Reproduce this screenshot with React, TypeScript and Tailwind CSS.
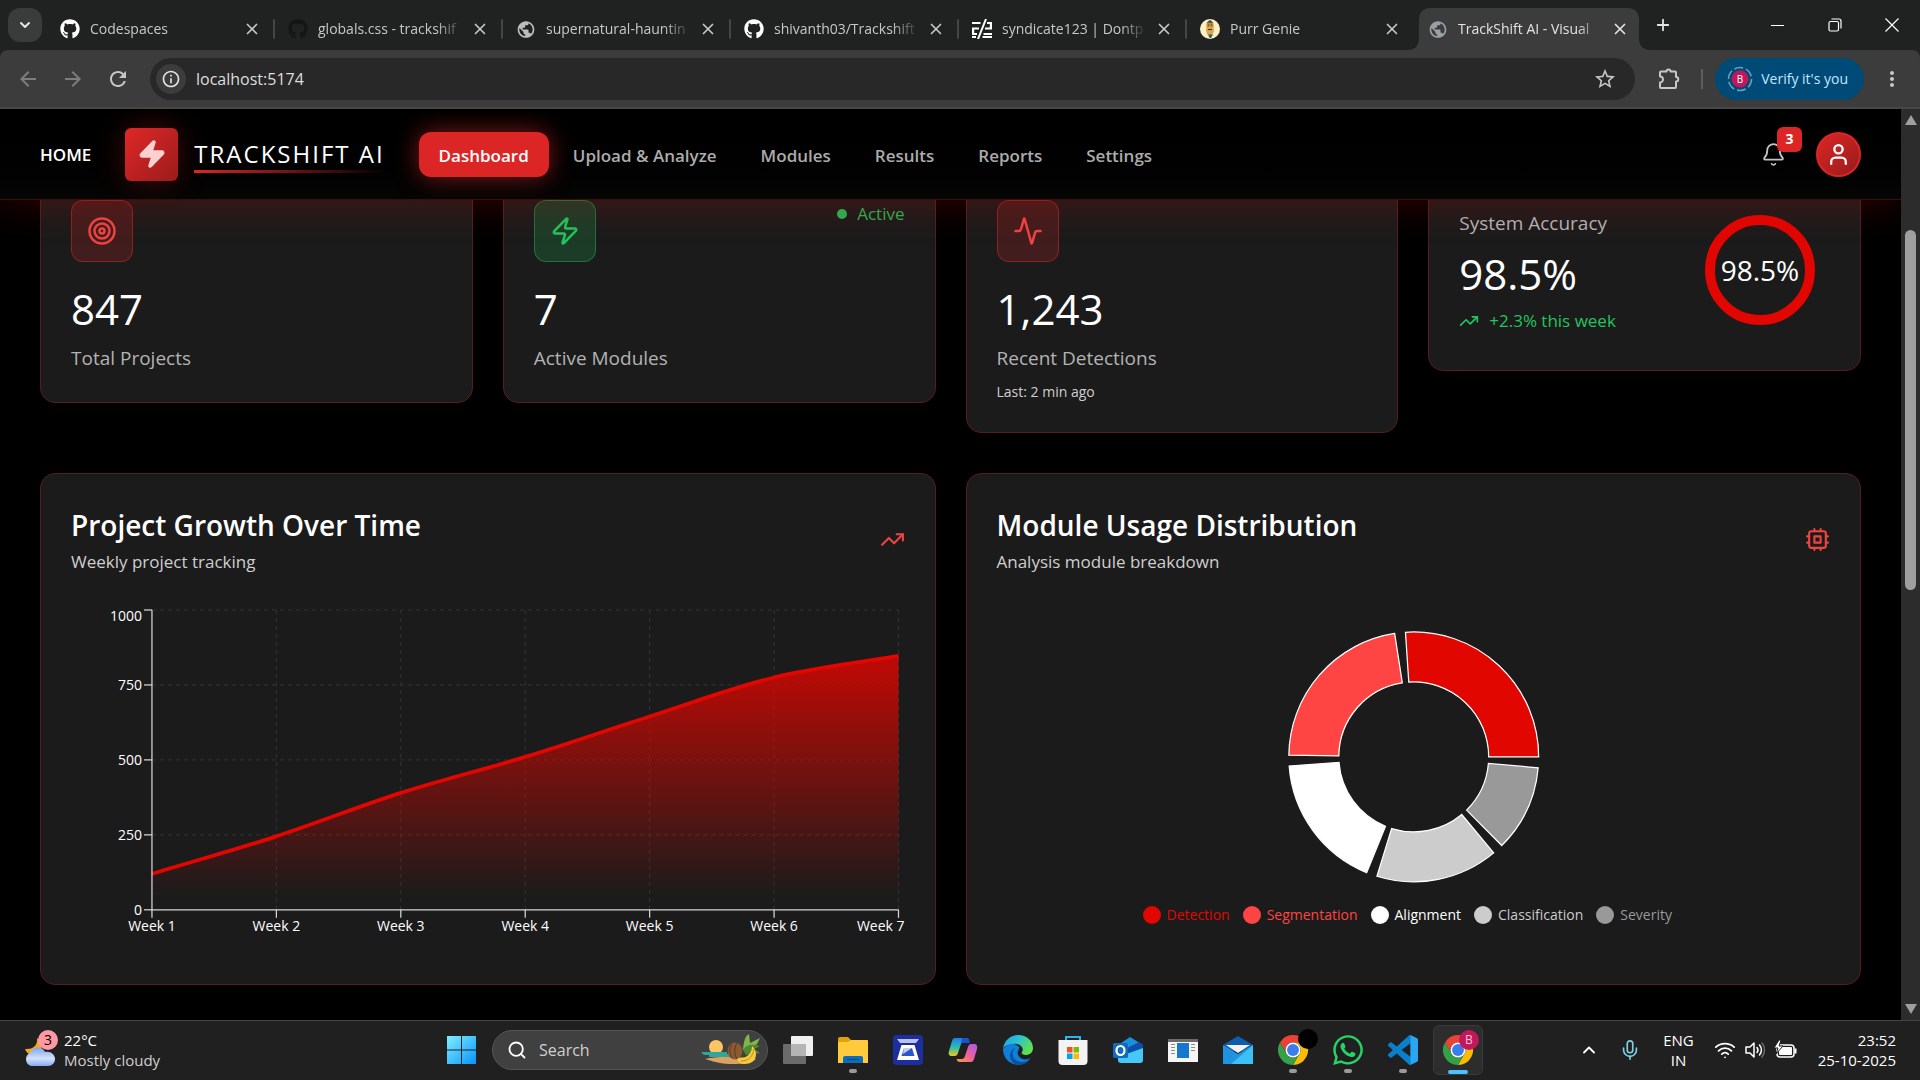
import React from 'react';
import { Activity, Bell, ChevronDown, ChevronUp, Mic, Plus, Search, Target, TrendingUp, User, Wifi, X, Zap } from 'lucide-react';
import { FaGithub, FaWhatsapp } from 'react-icons/fa';
import { MdArrowBack, MdArrowForward, MdInfoOutline, MdMoreVert, MdPublic, MdRefresh, MdStarOutline } from 'react-icons/md';

/* ---------- Browser window ---------- */

const SyndicateIcon = () => (
  <svg viewBox="0 0 20 20" className="h-5 w-5" fill="none" stroke="#fff" strokeWidth="2.2">
    <path d="M0 4h8.500M0 9.500h7M0 15h5M15 4h5M13 9.500h7M11.500 15H20M0 18h4M10.500 18H20" />
    <path d="M14 0L6 20" strokeWidth="2" />
    <path d="M1.100 9v6M18.900 4v6" />
  </svg>
);

const GenieIcon = () => (
  <svg viewBox="0 0 20 20" className="h-5 w-5">
    <circle cx="10" cy="10" r="10" fill="#fdf0c4" />
    <path d="M6.5 5.5c0-5 7-5 7 0v3h-7z" fill="#c98a35" />
    <path d="M6.8 3.8L10 .8l3.2 3z" fill="#1f5f5b" />
    <path d="M6.6 8h6.8l.6 4-1.6 4H7.6L6 12z" fill="#d9a557" />
    <path d="M8 15.5h5l-2 3.5H9.6z" fill="#1f6b62" />
    <path d="M8 6h1M11 6h1M8 10.5h4" stroke="#4d2f12" strokeWidth="1" />
  </svg>
);

const PuzzleIcon = () => (
  <svg viewBox="0 0 24 24" className="h-6 w-6" fill="none" stroke="currentColor" strokeWidth="2" strokeLinejoin="round">
    <path d="M3 5.500A1 1 0 0 1 4 4.500h5.500a2 2 0 0 1 4 0H18a1 1 0 0 1 1 1V10a2 2 0 0 1 0 4.500V20a1 1 0 0 1-1 1H4a1 1 0 0 1-1-1v-4.500a3 3 0 0 0 0-6z" />
  </svg>
);

const tabs = [
  { title: 'Codespaces', icon: <FaGithub className="h-5 w-5 text-white" /> },
  { title: 'globals.css - trackshif', icon: <FaGithub className="h-5 w-5 text-[#141515]" /> },
  { title: 'supernatural-hauntin', icon: <MdPublic className="h-[21px] w-[21px] text-[#bdbdbd]" /> },
  { title: 'shivanth03/Trackshift', icon: <FaGithub className="h-5 w-5 text-white" /> },
  { title: 'syndicate123 | Dontp', icon: <SyndicateIcon /> },
  { title: 'Purr Genie', icon: <GenieIcon /> },
  { title: 'TrackShift AI - Visual', icon: <MdPublic className="h-[21px] w-[21px] text-[#9aa0a6]" />, active: true },
];

const TabBar = () => (
  <div className="flex h-[50px] items-end bg-[#1f2221]">
    <button aria-label="Search tabs" className="mb-2 ml-2 flex h-[34px] w-[34px] items-center justify-center rounded-xl bg-[#3a3b3b] text-[#e3e3e3]">
      <ChevronDown className="h-4 w-4" strokeWidth={3} />
    </button>
    <div className="ml-[5px] flex min-w-0">
      {tabs.map((tab, i) => (
        <div
          key={tab.title}
          className={`relative flex h-[42px] w-[228px] min-w-0 items-center gap-2 pr-3.5 pl-[13px] ${
            tab.active ? 'text-[#e3e3e3]' : 'text-[#c7c7c7]'
          }`}
        >
          {tab.active && (
            <svg viewBox="0 0 244 42" preserveAspectRatio="none" className="absolute inset-y-0 -left-2 h-full w-[244px]" fill="#3c3c3c">
              <path d="M0 42C8 42 12 38 12 30V12C12 4 16 0 24 0H220C228 0 232 4 232 12V30C232 38 236 42 244 42Z" />
            </svg>
          )}
          <span className="relative flex w-5 shrink-0 justify-center">{tab.icon}</span>
          <span className="relative ml-0.5 min-w-0 flex-1 overflow-hidden text-sm whitespace-nowrap [mask-image:linear-gradient(to_right,#000_82%,transparent)]">
            {tab.title}
          </span>
          <button aria-label={`Close ${tab.title}`} className="relative">
            <X className="h-[18px] w-[18px]" strokeWidth={2.2} />
          </button>
          {i < tabs.length - 2 && <span className="absolute right-0 h-5 w-0.5 rounded bg-[#454646]" />}
        </div>
      ))}
    </div>
    <button aria-label="New tab" className="ml-0.5 flex h-[50px] w-9 items-center justify-center text-[#e3e3e3]">
      <Plus className="h-[18px] w-[18px]" strokeWidth={2.4} />
    </button>
    <div className="ml-auto flex h-[50px] text-white">
      <button aria-label="Minimize" className="flex w-[57px] items-center justify-center">
        <span className="h-px w-[13px] bg-white" />
      </button>
      <button aria-label="Restore" className="flex w-[57px] items-center justify-center">
        <svg viewBox="0 0 14 14" className="h-3.5 w-3.5" fill="none" stroke="#fff" strokeWidth="1.2">
          <rect x="1" y="3.5" width="9.5" height="9.5" rx="1.5" />
          <path d="M3.5 1H11a2 2 0 0 1 2 2v7.5" />
        </svg>
      </button>
      <button aria-label="Close window" className="flex w-[57px] items-center justify-center">
        <svg viewBox="0 0 14 14" className="h-3.5 w-3.5" stroke="#fff" strokeWidth="1.2">
          <path d="M.5.5l13 13M13.5.5l-13 13" />
        </svg>
      </button>
    </div>
  </div>
);

const Toolbar = () => (
  <div className="flex h-[59px] items-center rounded-t-lg border-b-2 border-[#474747] bg-[#3c3c3c] pr-4 pl-4 text-[#c7c7c7]">
    <button aria-label="Back" className="w-[45px] text-[#7d7d7d]">
      <MdArrowBack className="h-6 w-6" />
    </button>
    <button aria-label="Forward" className="w-[45px] text-[#7d7d7d]">
      <MdArrowForward className="h-6 w-6" />
    </button>
    <button aria-label="Reload" className="w-11">
      <MdRefresh className="h-6 w-6" />
    </button>
    <div className="flex h-[42px] flex-1 items-center rounded-full bg-[#282828] pr-[18px] pl-1.5">
      <button aria-label="View site information" className="flex h-[30px] w-[30px] items-center justify-center rounded-full bg-[#3c3c3c] text-[#e3e3e3]">
        <MdInfoOutline className="h-5 w-5" />
      </button>
      <input
        aria-label="Address"
        defaultValue="localhost:5174"
        className="ml-2.5 min-w-0 flex-1 bg-transparent text-base text-[#dedede] outline-none"
      />
      <button aria-label="Bookmark this tab">
        <MdStarOutline className="h-6 w-6" />
      </button>
    </div>
    <button aria-label="Extensions" className="ml-[22px]">
      <PuzzleIcon />
    </button>
    <span className="ml-5 h-5 w-0.5 bg-[#5c5c5c]" />
    <button className="ml-3 flex h-[42px] items-center gap-2 rounded-full bg-[#004a77] pr-4 pl-3 text-sm text-[#c2e7ff]">
      <svg viewBox="0 0 26 26" className="h-[26px] w-[26px]">
        <circle cx="13" cy="13" r="11.5" fill="none" stroke="#6f9fbd" strokeWidth="1.6" strokeDasharray="9 3" />
        <circle cx="13" cy="13" r="8.5" fill="#c2185b" />
        <text x="13" y="16.5" textAnchor="middle" fontSize="10" fill="#fff">B</text>
      </svg>
      Verify it's you
    </button>
    <button aria-label="Browser menu" className="ml-4">
      <MdMoreVert className="h-6 w-6" />
    </button>
  </div>
);

const Scrollbar = () => (
  <div className="flex w-[19px] shrink-0 flex-col items-center bg-[#2c2c2c] py-1.5">
    <svg viewBox="0 0 12 10" className="h-2.5 w-3" fill="#9f9f9f">
      <path d="M6 0l6 10H0z" />
    </svg>
    <div className="h-[105px]" />
    <div className="h-[40%] w-[11px] rounded-full bg-[#9f9f9f]" />
    <svg viewBox="0 0 12 10" className="mt-auto h-2.5 w-3" fill="#9f9f9f">
      <path d="M6 10L0 0h12z" />
    </svg>
  </div>
);

/* ---------- Navigation ---------- */

const navItems = ['Dashboard', 'Upload & Analyze', 'Modules', 'Results', 'Reports', 'Settings'];

const Navbar = () => (
  <header className="relative z-10 flex h-[91px] items-center border-b border-[#3d0d0c] bg-linear-to-b from-black to-[#050505] px-10 shadow-[0_4px_40px_rgba(225,6,0,0.22)]">
    <a href="#home" className="pt-0.5 text-[17px] font-semibold text-white">HOME</a>
    <div className="ml-[34px] flex items-center gap-4">
      <div className="flex h-[53px] w-[53px] items-center justify-center rounded-md bg-linear-to-br from-[#e02828] to-[#9c1b1b] shadow-[0_0_30px_rgba(220,38,38,0.3)]">
        <Zap className="h-[30px] w-[30px] fill-[#fbd0d0] text-[#fbd0d0]" />
      </div>
      <div className="relative">
        <span className="text-2xl tracking-[2px] text-white">TRACKSHIFT AI</span>
        <span className="absolute inset-x-0 top-full h-[3px] bg-linear-to-r from-[#dc2626] to-transparent" />
      </div>
    </div>
    <nav className="ml-[34px] flex gap-1">
      {navItems.map((item, i) => (
        <a
          key={item}
          href={`#${item.toLowerCase()}`}
          className={
            i === 0
              ? 'rounded-xl bg-[#dc2626] px-5 pt-[11px] pb-[9px] text-[17px] leading-[25px] font-semibold text-white shadow-[0_0_24px_rgba(220,38,38,0.6)]'
              : 'px-5 pt-[11px] pb-[9px] text-[17px] leading-[25px] font-semibold text-[#acacac]'
          }
        >
          {item}
        </a>
      ))}
    </nav>
    <div className="ml-auto flex items-center gap-[30px]">
      <button aria-label="Notifications" className="relative text-[#c4c4c4]">
        <Bell className="h-[25px] w-[25px]" strokeWidth={1.7} />
        <span className="absolute -top-[15px] -right-4 flex h-[25px] w-[25px] items-center justify-center rounded-md bg-[#dc2626] text-sm font-bold text-white">
          3
        </span>
      </button>
      <button aria-label="Account" className="flex h-[45px] w-[45px] items-center justify-center rounded-full border-2 border-[#dc2626] bg-linear-to-br from-[#dc2626] to-[#991b1b] text-white">
        <User className="h-[25px] w-[25px]" strokeWidth={2.2} />
      </button>
    </div>
  </header>
);

/* ---------- Dashboard cards ---------- */

const Card = ({ children }: { children: React.ReactNode }) => (
  <section className="rounded-[15px] border border-[#551d1d] bg-[#1b1b1b] p-[30px]">{children}</section>
);

interface StatProps {
  icon: React.ReactNode;
  value: string;
  label: string;
  note?: string;
  status?: string;
  green?: boolean;
}

const StatCard = ({ icon, value, label, note, status, green }: StatProps) => (
  <Card>
    <div className="mb-5 flex items-start justify-between">
      <div
        className={`rounded-[12px] border p-[15px] ${
          green ? 'border-[#22c55e]/40 bg-[#22c55e]/20 text-[#22c55e]' : 'border-[#dc2626]/50 bg-[#dc2626]/20 text-[#ef4444]'
        }`}
      >
        {icon}
      </div>
      {status && (
        <div className="flex items-center gap-2.5 text-[17px] leading-[27px] text-[#26b454]">
          <span className="h-2.5 w-2.5 rounded-full bg-[#26b454]" />
          {status}
        </div>
      )}
    </div>
    <p className="text-[42px] leading-[54px] text-white">{value}</p>
    <p className="mt-2 text-[19px] leading-7 text-[#b3b3b3]">{label}</p>
    {note && <p className="mt-2.5 text-sm leading-5 text-[#cfcfcf]">{note}</p>}
  </Card>
);

const AccuracyCard = () => (
  <Card>
    <div className="flex items-center justify-between">
      <div>
        <p className="text-[19px] leading-8 text-[#b3b3b3]">System Accuracy</p>
        <p className="mt-2 text-[42px] leading-[54px] text-white">98.5%</p>
        <p className="mt-2 flex items-center gap-2.5 text-[17px] leading-6 text-[#22c55e]">
          <TrendingUp className="h-5 w-5" />
          +2.3% this week
        </p>
      </div>
      <svg viewBox="0 0 140 140" className="h-[140px] w-[140px]">
        <circle cx="70" cy="70" r="50" fill="none" stroke="#e10600" strokeWidth="10" />
        <text x="70" y="81" textAnchor="middle" fontSize="28" fill="#fff">98.5%</text>
      </svg>
    </div>
  </Card>
);

const ChartHeader = ({ title, subtitle, icon }: { title: string; subtitle: string; icon: React.ReactNode }) => (
  <div className="mb-[30px] flex items-center justify-between">
    <div>
      <h2 className="text-[28px] leading-[42px] font-semibold text-white">{title}</h2>
      <p className="mt-1 text-[17px] leading-6 text-[#cfcfcf]">{subtitle}</p>
    </div>
    <span className="text-[#ef4444]">{icon}</span>
  </div>
);

/* ---------- Growth chart ---------- */

const growth = [120, 245, 390, 510, 645, 775, 847];
const plot = { left: 81, right: 828, top: 6, bottom: 306 };
const px = (i: number) => plot.left + ((plot.right - plot.left) * i) / (growth.length - 1);
const py = (v: number) => plot.bottom - ((plot.bottom - plot.top) * v) / 1000;

const smoothLine = () => {
  const step = px(1) - px(0);
  const slopes = growth.map((_, i) => {
    const a = Math.max(i - 1, 0);
    const b = Math.min(i + 1, growth.length - 1);
    return (py(growth[b]) - py(growth[a])) / (px(b) - px(a));
  });
  return growth
    .map((v, i) => {
      if (i === 0) return `M${px(0)},${py(v)}`;
      const third = step / 3;
      return `C${px(i - 1) + third},${py(growth[i - 1]) + slopes[i - 1] * third} ${px(i) - third},${py(v) - slopes[i] * third} ${px(i)},${py(v)}`;
    })
    .join('');
};

const GrowthChart = () => {
  const line = smoothLine();
  return (
    <svg viewBox="0 0 834 350" className="w-full" role="img" aria-label="Project growth by week">
      <defs>
        <linearGradient id="growth" x1="0" y1="0" x2="0" y2="1">
          <stop offset="5%" stopColor="#e10600" stopOpacity="0.8" />
          <stop offset="95%" stopColor="#e10600" stopOpacity="0" />
        </linearGradient>
      </defs>
      <g stroke="#343434" strokeDasharray="4 4">
        {[250, 500, 750, 1000].map((v) => (
          <line key={v} x1={plot.left} x2={plot.right} y1={py(v)} y2={py(v)} />
        ))}
        {growth.slice(1).map((_, i) => (
          <line key={i} x1={px(i + 1)} x2={px(i + 1)} y1={plot.top} y2={plot.bottom} />
        ))}
      </g>
      <path d={`${line}V${plot.bottom}H${plot.left}Z`} fill="url(#growth)" />
      <path d={line} fill="none" stroke="#e10600" strokeWidth="3.75" />
      <g stroke="#d6d6d6" strokeWidth="1.25">
        <path d={`M${plot.left} ${plot.top}V${plot.bottom}H${plot.right}`} fill="none" />
        {[0, 250, 500, 750, 1000].map((v) => (
          <line key={v} x1={plot.left - 8} x2={plot.left} y1={py(v)} y2={py(v)} />
        ))}
        {growth.map((_, i) => (
          <line key={i} x1={px(i)} x2={px(i)} y1={plot.bottom} y2={plot.bottom + 8} />
        ))}
      </g>
      <g fill="#fff" fontSize="14">
        {[0, 250, 500, 750, 1000].map((v) => (
          <text key={v} x={plot.left - 10} y={v === 1000 ? py(v) + 11 : py(v) + 5} textAnchor="end">{v}</text>
        ))}
        {growth.map((_, i) => (
          <text
            key={i}
            x={i === growth.length - 1 ? 834 : px(i)}
            y={plot.bottom + 21}
            textAnchor={i === growth.length - 1 ? 'end' : 'middle'}
          >
            {`Week ${i + 1}`}
          </text>
        ))}
      </g>
    </svg>
  );
};

/* ---------- Module usage chart ---------- */

const modules = [
  { name: 'Detection', share: 28, color: '#e10600' },
  { name: 'Segmentation', share: 24, color: '#ff4444' },
  { name: 'Alignment', share: 19, color: '#ffffff' },
  { name: 'Classification', share: 17, color: '#cccccc' },
  { name: 'Severity', share: 12, color: '#999999' },
];

const point = (r: number, deg: number) => {
  const a = (deg * Math.PI) / 180;
  return `${(417 + r * Math.cos(a)).toFixed(2)},${(153 - r * Math.sin(a)).toFixed(2)}`;
};

const UsageChart = () => {
  let angle = 0;
  const arcs = modules.map((m) => {
    const start = angle;
    const end = start + m.share * 3.35;
    angle = end + 5;
    return {
      ...m,
      d: `M${point(125, start)}A125,125 0 0 0 ${point(125, end)}L${point(75, end)}A75,75 0 0 1 ${point(75, start)}Z`,
    };
  });
  return (
    <div className="pb-7">
      <svg viewBox="0 0 834 300" className="w-full" role="img" aria-label="Module usage">
        {arcs.map((a) => (
          <path key={a.name} d={a.d} fill={a.color} stroke="#fff" strokeWidth="1.25" />
        ))}
      </svg>
      <ul className="flex justify-center gap-[13px] pr-3 text-sm leading-[22px]">
        {modules.map((m) => (
          <li key={m.name} className="flex items-center gap-1.5" style={{ color: m.color }}>
            <span className="h-[18px] w-[18px] rounded-full" style={{ background: m.color }} />
            {m.name}
          </li>
        ))}
      </ul>
    </div>
  );
};

const CpuIcon = () => (
  <svg viewBox="0 0 24 24" className="h-[25px] w-[25px]" fill="none" stroke="currentColor" strokeWidth="2" strokeLinecap="round" strokeLinejoin="round">
    <rect x="4" y="4" width="16" height="16" rx="2" />
    <rect x="9" y="9" width="6" height="6" />
    <path d="M15 2v2M15 20v2M2 15h2M2 9h2M20 15h2M20 9h2M9 2v2M9 20v2" />
  </svg>
);

const Dashboard = () => (
  <main className="flex-1 overflow-hidden bg-black px-10">
    <div className="-mt-[31px] grid grid-cols-4 items-start gap-[30px]">
      <StatCard icon={<Target className="h-[30px] w-[30px]" />} value="847" label="Total Projects" />
      <StatCard icon={<Zap className="h-[30px] w-[30px]" />} value="7" label="Active Modules" status="Active" green />
      <StatCard icon={<Activity className="h-[30px] w-[30px]" />} value="1,243" label="Recent Detections" note="Last: 2 min ago" />
      <AccuracyCard />
    </div>
    <div className="mt-10 grid grid-cols-2 gap-[30px]">
      <Card>
        <ChartHeader title="Project Growth Over Time" subtitle="Weekly project tracking" icon={<TrendingUp className="h-[25px] w-[25px]" />} />
        <GrowthChart />
      </Card>
      <Card>
        <ChartHeader title="Module Usage Distribution" subtitle="Analysis module breakdown" icon={<CpuIcon />} />
        <UsageChart />
      </Card>
    </div>
  </main>
);

/* ---------- Taskbar ---------- */

const WeatherIcon = () => (
  <svg viewBox="0 0 36 36" className="h-9 w-9">
    <defs>
      <linearGradient id="cloud" x1="0" y1="0" x2="0" y2="1">
        <stop offset="0" stopColor="#7fa6ea" />
        <stop offset="0.6" stopColor="#d3e2fb" />
        <stop offset="1" stopColor="#86aaf0" />
      </linearGradient>
    </defs>
    <path d="M13 6c1 6-3 12-12 11 2 6 9 8 14 4 4-4 3-12-2-15z" fill="#f6a81c" />
    <path d="M7 34a7 7 0 0 1-1-13c1-6 12-8 15-1 6-1 10 3 10 7s-3 7-7 7z" fill="url(#cloud)" />
  </svg>
);

const WindowsIcon = () => (
  <svg viewBox="0 0 30 30" className="h-[30px] w-[30px]">
    <defs>
      <linearGradient id="win" x1="0" y1="0" x2="1" y2="1">
        <stop offset="0" stopColor="#7eefff" />
        <stop offset="1" stopColor="#0a93fb" />
      </linearGradient>
    </defs>
    <path d="M0 1h14v13.500H0zM15 1h14v13.500H15zM0 15.500h14V29H0zM15 15.500h14V29H15z" fill="url(#win)" />
  </svg>
);

const FruitIcon = () => (
  <svg viewBox="0 0 64 36" className="h-9 w-16">
    <circle cx="17" cy="15" r="7" fill="#fbc765" />
    <path d="M2 20h26v2h4v3H10v-2H5z" fill="#2fa59b" />
    <path d="M6 27c12-3 35-2 51 0-4 4-12 5-24 5-8 0-15-1-27-5z" fill="#d9a262" />
    <path d="M44 17c1-8 2-13 6-15l1 9 10-5-3 6-6 5-6 2z" fill="#7fb54a" />
    <path d="M44 18c4-6 9-6 17-4l-6 3 6 4-14 2z" fill="#4f8a31" />
    <ellipse cx="36" cy="19" rx="7.500" ry="8.500" fill="#8a5a33" />
    <path d="M33 12c-3 4-3 9 0 14M38 11c-3 5-3 11 0 16" stroke="#5e3a1c" strokeWidth="1" fill="none" />
    <path d="M39 26c9 1 14-5 14-12 7 6 5 18-7 18-5 0-8-2-7-6z" fill="#f7c93c" />
    <path d="M42 29c8 0 12-5 13-12" stroke="#c98b1b" strokeWidth="1" fill="none" />
  </svg>
);

const TaskViewIcon = () => (
  <svg viewBox="0 0 30 30" className="h-[30px] w-[30px]">
    <rect x="0" y="9" width="23" height="20" rx="1" fill="#6b6b6b" />
    <rect x="8" y="1" width="22" height="20" rx="1" fill="#efefef" />
    <rect x="8" y="9" width="15" height="12" fill="#b5b5b5" />
  </svg>
);

const FolderIcon = () => (
  <svg viewBox="0 0 30 30" className="h-[30px] w-[30px]">
    <path d="M0 4a2 2 0 0 1 2-2h8l3 3v5H0z" fill="#e3a008" />
    <path d="M0 7h10l3-2h16a1 1 0 0 1 1 1v22H0z" fill="#ffcb3d" />
    <path d="M5 28v-5a2 2 0 0 1 2-2h16a2 2 0 0 1 2 2v5z" fill="#0f6cbd" />
    <path d="M9 24.500h12" stroke="#0a4a8a" strokeWidth="1.200" />
  </svg>
);

const ScanIcon = () => (
  <svg viewBox="0 0 30 30" className="h-[30px] w-[30px]">
    <rect width="30" height="30" rx="4" fill="#1d2f9e" />
    <path d="M4 4h22l-3 4H7z" fill="#b9c1ec" />
    <path d="M8.500 10h13L26 25H4z" fill="#fff" />
    <path d="M11 13h8l2.500 8H8.500z" fill="#2d57c9" />
    <path d="M11 13h8l-9 6z" fill="#c3d0f4" />
  </svg>
);

const CopilotIcon = () => (
  <svg viewBox="0 0 30 30" className="h-[30px] w-[30px]">
    <defs>
      <linearGradient id="copA" x1="0" y1="0" x2="0" y2="1">
        <stop offset="0" stopColor="#1f7df0" />
        <stop offset="0.550" stopColor="#2fc2a4" />
        <stop offset="1" stopColor="#f5c518" />
      </linearGradient>
      <linearGradient id="copB" x1="1" y1="0" x2="0" y2="1">
        <stop offset="0" stopColor="#a35cf0" />
        <stop offset="0.500" stopColor="#ee5f9c" />
        <stop offset="1" stopColor="#ff9a3d" />
      </linearGradient>
    </defs>
    <path d="M7 3h11c2 0 3 1 3.500 3h-5c-2 0-3 1-3.500 3l-3 9c-.5 2-1.500 3-3.500 3H4c-3 0-4-2-3-5L4 6c.5-2 1.500-3 3-3z" fill="url(#copA)" />
    <path d="M14 3h4c2 0 3 1 3.500 4l.5 1h-6c-2 0-3 .5-3 1z" fill="#1b4fd8" />
    <path d="M23 27H12c-2 0-3-1-3.500-3h5c2 0 3-1 3.500-3l3-9c.5-2 1.500-3 3.500-3H26c3 0 3.500 2 3 5l-3 10c-.5 2-1.500 3-3 3z" fill="url(#copB)" />
  </svg>
);

const EdgeIcon = () => (
  <svg viewBox="0 0 30 30" className="h-[30px] w-[30px]">
    <defs>
      <linearGradient id="edgeTop" x1="0" y1="0" x2="1" y2="0.500">
        <stop offset="0" stopColor="#1f9be0" />
        <stop offset="0.500" stopColor="#2bc3d2" />
        <stop offset="1" stopColor="#5fe04e" />
      </linearGradient>
    </defs>
    <path d="M0 14a15 15 0 0 0 27.500 9c-5 3-12 1-13-5l2-6L8 7z" fill="#0f7fd8" />
    <path d="M0 14C1 5 8 0 15 0c9 0 15 6 15 13 0 5-4 7-7 7-4 0-5-2-4-3 2-3 0-7-5-8C8 8 2 10 0 14z" fill="url(#edgeTop)" />
    <path d="M12 13c-5 5-2 14 7 14 3 0 6-1 8.500-4C25 28 20 30 15 30 6 28 4 17 12 13z" fill="#0c4f9e" />
  </svg>
);

const StoreIcon = () => (
  <svg viewBox="0 0 30 30" className="h-[30px] w-[30px]">
    <path d="M8 8V2h14v6" fill="none" stroke="#2cb5ec" strokeWidth="2" />
    <path d="M.5 5h29v21a4 4 0 0 1-4 4h-21a4 4 0 0 1-4-4z" fill="#f3f3f3" />
    <path d="M9 12h5.500v5.500H9z" fill="#f25022" />
    <path d="M15.500 12H21v5.500h-5.500z" fill="#7fba00" />
    <path d="M9 18.500h5.500V24H9z" fill="#00a4ef" />
    <path d="M15.500 18.500H21V24h-5.500z" fill="#ffb900" />
  </svg>
);

const OutlookIcon = () => (
  <svg viewBox="0 0 30 30" className="h-[30px] w-[30px]">
    <path d="M5 10l12-8 13 8v4L18 20 5 18z" fill="#1b8fdc" />
    <path d="M12 14L26 7l4 3v6l-14 8z" fill="#0b4fa8" />
    <path d="M5 22l25-9v12a3 3 0 0 1-3 3H8a3 3 0 0 1-3-3z" fill="#45c8f5" />
    <rect x="0" y="8" width="15" height="15" rx="1.500" fill="#0f6cbd" />
    <ellipse cx="7.500" cy="15.500" rx="4" ry="4.500" fill="none" stroke="#fff" strokeWidth="2.200" />
  </svg>
);

const NewsIcon = () => (
  <svg viewBox="0 0 30 30" className="h-[30px] w-[30px]">
    <rect x="0" y="4" width="30" height="23" fill="#f5f5f5" />
    <path d="M0 4h30v3H0z" fill="#6b6b6b" />
    <rect x="9" y="8" width="12" height="15" fill="#1577cf" />
    <path d="M3 9.500h4M3 12.500h4M3 15.500h4M3 18.500h4M23 9.500h4M23 12.500h4M23 15.500h4" stroke="#8d8d8d" />
  </svg>
);

const MailIcon = () => (
  <svg viewBox="0 0 30 30" className="h-[30px] w-[30px]">
    <path d="M0 10L15 1l15 9-6 6H6z" fill="#0f5cae" />
    <path d="M0 10l15 9 15-9v19H0z" fill="#1f93e0" />
    <path d="M30 10L8 29h22z" fill="#3cc0f5" />
    <path d="M3 10h24L15 18z" fill="#f2f2f2" />
  </svg>
);

const ChromeIcon = () => (
  <svg viewBox="0 0 48 48" className="h-[30px] w-[30px]">
    <path d="M24 12h20.800A24 24 0 0 0 3.200 12l10.400 18A12 12 0 0 1 24 12z" fill="#ea4335" />
    <path d="M44.800 12H24a12 12 0 0 1 10.400 18L24 48a24 24 0 0 0 20.800-36z" fill="#fbbc05" />
    <path d="M13.600 30L3.200 12A24 24 0 0 0 24 48l10.400-18a12 12 0 0 1-20.800 0z" fill="#34a048" />
    <circle cx="24" cy="24" r="12" fill="#fff" />
    <circle cx="24" cy="24" r="9.500" fill="#3b7ded" />
  </svg>
);

const CodeIcon = () => (
  <svg viewBox="0 0 24 24" className="h-[30px] w-[30px]">
    <path
      d="M23.150 2.587L18.210.21a1.494 1.494 0 0 0-1.705.29l-9.460 8.630-4.120-3.128a.999.999 0 0 0-1.276.057L.327 7.261A1 1 0 0 0 .326 8.740L3.899 12 .326 15.260a1 1 0 0 0 .001 1.479L1.650 17.940a.999.999 0 0 0 1.276.057l4.120-3.128 9.460 8.630a1.492 1.492 0 0 0 1.704.290l4.942-2.377A1.500 1.500 0 0 0 24 20.060V3.939a1.500 1.500 0 0 0-.850-1.352zm-5.146 14.861L10.826 12l7.178-5.448v10.896z"
      fill="#0a7fcb"
    />
    <path d="M18 0.200l5.150 2.387A1.500 1.500 0 0 1 24 3.939V20.060a1.500 1.500 0 0 1-.850 1.352L18 23.800z" fill="#2aa5f2" />
  </svg>
);

const apps = [
  { name: 'Task view', icon: <TaskViewIcon /> },
  { name: 'File Explorer', icon: <FolderIcon />, open: true },
  { name: 'Scan', icon: <ScanIcon /> },
  { name: 'Copilot', icon: <CopilotIcon /> },
  { name: 'Edge', icon: <EdgeIcon /> },
  { name: 'Store', icon: <StoreIcon /> },
  { name: 'Outlook', icon: <OutlookIcon /> },
  { name: 'News', icon: <NewsIcon /> },
  { name: 'Mail', icon: <MailIcon /> },
  { name: 'Chrome', icon: <ChromeIcon />, open: true, badge: <span className="absolute top-1 right-0 h-5 w-5 rounded-full bg-black" /> },
  { name: 'WhatsApp', icon: <FaWhatsapp className="h-[34px] w-[34px] text-[#25d366]" />, open: true },
  { name: 'Visual Studio Code', icon: <CodeIcon />, open: true },
  {
    name: 'Chrome profile B',
    icon: <ChromeIcon />,
    current: true,
    badge: (
      <span className="absolute top-1 right-[3px] flex h-5 w-5 items-center justify-center rounded-full bg-[#c2185b] text-xs text-[#f3c6d8]">B</span>
    ),
  },
];

const Taskbar = () => (
  <footer className="grid h-[60px] grid-cols-[1fr_auto_1fr] items-center border-t border-[#444] bg-[#202020] pb-0.5 text-[15px] leading-5 text-white">
    <button className="flex items-center gap-1 pl-6 text-left">
      <span className="relative">
        <WeatherIcon />
        <span className="absolute -top-0.5 right-0.5 flex h-5 w-5 items-center justify-center rounded-full bg-[#ff99a4] text-sm text-black">3</span>
      </span>
      <span>
        22°C
        <br />
        <span className="text-[#cfcfcf]">Mostly cloudy</span>
      </span>
    </button>
    <div className="flex items-center gap-[5px]">
      <button aria-label="Start" className="flex h-[50px] w-[50px] items-center justify-center">
        <WindowsIcon />
      </button>
      <label className="flex h-10 w-[276px] items-center rounded-full border border-[#555] bg-[#404040] pr-1 pl-3.5">
        <Search className="h-5 w-5 shrink-0" strokeWidth={2.2} />
        <input type="search" aria-label="Search" placeholder="Search" className="ml-3 w-full min-w-0 bg-transparent text-base outline-none placeholder:text-[#cfcfcf]" />
        <span className="shrink-0">
          <FruitIcon />
        </span>
      </label>
      {apps.map((app) => (
        <button
          key={app.name}
          aria-label={app.name}
          className={`relative flex h-[50px] w-[50px] items-center justify-center rounded-md ${app.current ? 'border border-[#3a3a3a] bg-[#2d2d2d]' : ''}`}
        >
          {app.icon}
          {app.badge}
          {app.open && <span className="absolute bottom-0.5 h-1 w-2 rounded-full bg-[#9a9a9a]" />}
          {app.current && <span className="absolute bottom-0 h-1 w-5 rounded-full bg-[#4cc2ff]" />}
        </button>
      ))}
    </div>
    <div className="flex items-center justify-end pr-6">
      <button aria-label="Show hidden icons" className="mr-5">
        <ChevronUp className="h-5 w-5" strokeWidth={2.2} />
      </button>
      <button aria-label="Microphone" className="mr-[22px] text-[#7fd0e6]">
        <Mic className="h-[22px] w-[22px]" strokeWidth={1.8} />
      </button>
      <button aria-label="Input language" className="mr-5 text-center">
        ENG
        <br />
        IN
      </button>
      <button aria-label="Network, volume and battery" className="mr-5 flex items-center gap-2">
        <Wifi className="h-[22px] w-[22px]" />
        <svg viewBox="0 0 22 22" className="h-[22px] w-[22px]" fill="none" stroke="#fff" strokeWidth="1.500" strokeLinecap="round" strokeLinejoin="round">
          <path d="M10 4L6 8H2v6h4l4 4z" />
          <path d="M13 8.500a4 4 0 0 1 0 5M15.500 6a7.500 7.500 0 0 1 0 10" />
          <path d="M18 4a11 11 0 0 1 0 14" stroke="#6b6b6b" />
        </svg>
        <svg viewBox="0 0 24 22" className="h-[22px] w-6">
          <rect x="3" y="6" width="17" height="12" rx="3" fill="none" stroke="#fff" strokeWidth="1.500" />
          <rect x="5" y="8" width="13" height="8" rx="1" fill="#fff" />
          <path d="M21.500 9.500v5" stroke="#fff" strokeWidth="2" />
          <path d="M5 1L0 9h4l-2 6 7-8H5l2-6z" fill="#fff" stroke="#202020" strokeWidth="1" />
        </svg>
      </button>
      <span className="text-right">
        23:52
        <br />
        25-10-2025
      </span>
    </div>
  </footer>
);

const App = () => (
  <div className="flex h-screen flex-col overflow-hidden bg-[#1f2221] font-['Open_Sans','Noto_Sans',sans-serif]">
    <TabBar />
    <Toolbar />
    <div className="flex min-h-0 flex-1 bg-black">
      <div className="flex min-w-0 flex-1 flex-col overflow-hidden">
        <Navbar />
        <Dashboard />
      </div>
      <Scrollbar />
    </div>
    <Taskbar />
  </div>
);

export default App;
